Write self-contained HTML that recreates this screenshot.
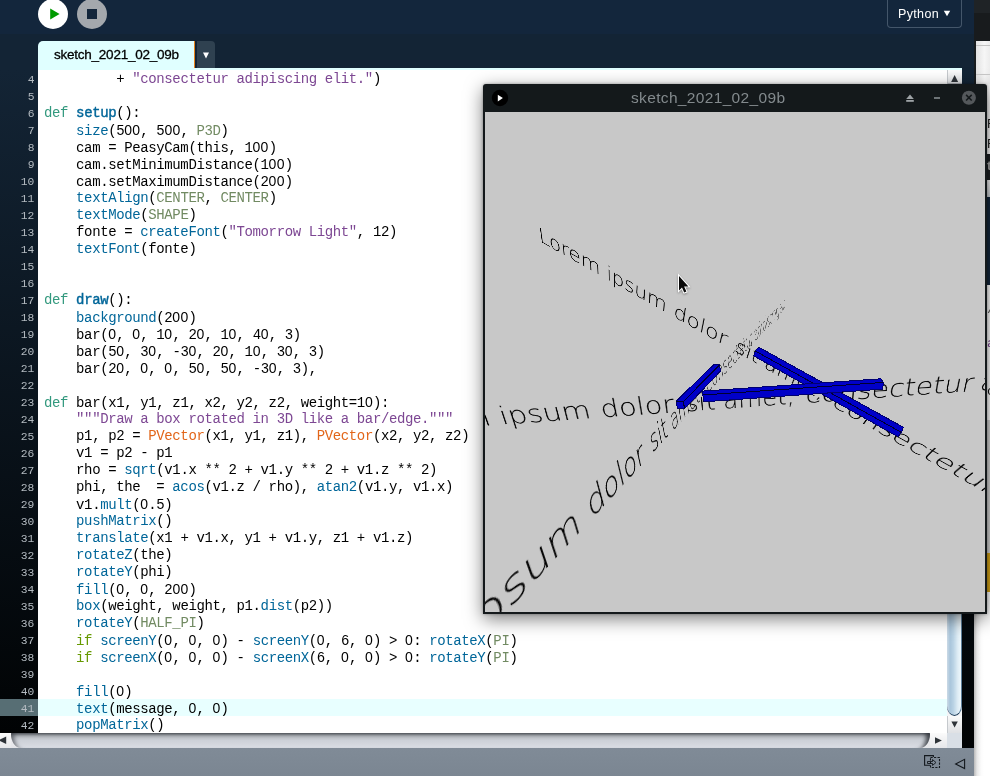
<!DOCTYPE html>
<html><head><meta charset="utf-8"><title>sketch_2021_02_09b</title>
<style>
html,body{margin:0;padding:0;background:#12243a;}
body{width:990px;height:776px;overflow:hidden;}
#app{position:relative;width:990px;height:776px;overflow:hidden;background:#132538;font-family:"Liberation Sans",sans-serif;}
#app>div{position:absolute;will-change:transform;}
#toolbar{left:0;top:0;width:974px;height:70px;background:linear-gradient(#13263c 0,#13263c 34px,#132435 34px,#132435 100%);}
#run{left:38px;top:-1px;width:30px;height:30px;}
#stop{left:77px;top:-1px;width:30px;height:30px;}
#mode{left:887px;top:0;width:75px;height:28px;border:1px solid #44566a;border-top:none;border-radius:0 0 4px 4px;box-sizing:border-box;color:#fff;}
#mode .mt{position:absolute;left:10px;top:6.6px;font-size:12.5px;line-height:15px;letter-spacing:0.35px;}
#mode .tri{position:absolute;left:54.5px;top:10px;}
#tab{left:38px;top:41px;width:156px;height:29px;background:#e0ffff;border-radius:5px 0 0 0;color:#000;font-size:13.5px;line-height:27px;}
#tab span{position:absolute;left:16px;top:0;white-space:nowrap;letter-spacing:-0.24px;-webkit-text-stroke:0.3px #000;}
#tabline{left:194px;top:41px;width:1px;height:27px;background:#e8841a;}
#tabarrow{left:197px;top:41px;width:18px;height:27px;background:#2f4150;border-radius:0 4px 0 0;}
#topline{left:38px;top:68px;width:924px;height:2px;background:#e0ffff;}
#gutter{left:0;top:70px;width:38px;height:663px;background:linear-gradient(#132435,#010304);color:#b4bbc1;font-family:"Liberation Mono",monospace;font-size:11.3px;overflow:hidden;}
#gutter div{height:17px;line-height:21px;text-align:right;padding-right:3.4px;letter-spacing:0.2px;}
#gutter div.hl{background:#576e74;}
#code{left:38px;top:70px;width:909px;height:663px;background:#fff;color:#000;font-family:"Liberation Mono",monospace;font-size:14px;letter-spacing:-0.38px;overflow:hidden;white-space:pre;}
#code div{height:17px;line-height:19px;padding-left:6px;}
#code div.hl{background:#e8ffff;}
.k{color:#33997e;}
.f{color:#006699;-webkit-text-stroke:0.4px #006699;}
.b{color:#006699;}
.c{color:#718a62;}
.s{color:#7d4793;}
.p{color:#e2661a;}
.i{color:#669900;}
#vscroll{left:947px;top:70px;width:15px;height:663px;background:#f3f4f6;}
#vscroll .sbtn{position:absolute;left:0;width:15px;background:linear-gradient(#fafafa,#dfe1e4);}
#vscroll .up{top:0;height:14px;box-shadow:inset 1px 0 0 #c5c9cd,inset 0 -1px 0 #b9bdc2;}
#vscroll .down{top:646px;height:17px;box-shadow:inset 1px 0 0 #c5c9cd;}
#vscroll .vthumb{position:absolute;left:0;top:14px;width:15px;height:632px;box-sizing:border-box;border-radius:0 0 9px 9px/0 0 12px 12px;border-bottom:1.5px solid #1d3a56;border-right:1px solid #5d7f9b;background:linear-gradient(90deg,#ccdae6 0,#a9c5db 22%,#b9d2e4 45%,#dcebf4 75%,#eff8fc 100%);}
#hscroll{left:0;top:733px;width:947px;height:15px;background:linear-gradient(#f1f1f3,#e4e5e9);box-shadow:inset 0 1px 0 #8e9298;}
#hscroll .hbtn{position:absolute;top:0;height:15px;background:linear-gradient(#fbfbfb,#e6e7ea);}
#hscroll .left{left:0;width:11px;}
#hscroll .right{left:930px;width:17px;}
#hscroll .hthumb{position:absolute;left:11px;top:0;width:919px;height:15px;border-radius:1px 1px 10px 10px/1px 1px 14px 14px;background:linear-gradient(#8f949a 0,#b4b8be 20%,#cdd1d8 50%,#dadde4 100%);box-shadow:inset 5px 2px 4px -2px rgba(40,44,50,.6),inset -6px 2px 4px -2px rgba(30,34,40,.75);}
#corner{left:947px;top:733px;width:15px;height:15px;background:#d9dfe6;}
#darkstrip{left:962px;top:70px;width:12px;height:678px;background:linear-gradient(#132435,#010304);}
#status{left:0;top:748px;width:974px;height:28px;background:linear-gradient(#808b97,#7b8692);}
#sticons{left:921px;top:748px;width:54px;height:28px;}
#win{left:483px;top:84px;width:504px;height:530px;background:#14191b;border-radius:3px 3px 0 0;box-shadow:0 5px 18px rgba(0,0,0,.5),0 0 3px rgba(0,0,0,.35);}
#titlebar{position:absolute;left:0;top:0;width:504px;height:28px;}
#wicon{position:absolute;left:8px;top:5px;}
#wtitle{position:absolute;left:148px;top:0;line-height:28px;font-size:15.5px;color:#838a8d;white-space:nowrap;letter-spacing:0.34px;}
#wbtns{position:absolute;left:413px;top:0;}
#canvas{position:absolute;left:2px;top:28px;width:500px;height:500px;background:#c8c8c8;overflow:hidden;}
#bars{position:absolute;left:0;top:0;}
.bf{fill:#0000c8;stroke:#0000c8;stroke-width:1;stroke-linejoin:round;}
.be{fill:none;stroke:#000030;stroke-width:1;}
#cursor{left:672px;top:270px;width:20px;height:26px;filter:drop-shadow(0 1px 1px rgba(0,0,0,.35));}
#bgwin{left:974px;top:0;width:16px;height:776px;overflow:hidden;background:#fff;}
#bgwin>div,#bgwin>span{position:absolute;}
.z{font-family:"Liberation Sans",sans-serif;letter-spacing:0.23px;}
.bo{fill:none;stroke:#00002a;stroke-width:1;stroke-opacity:.55;}

.t3d{position:absolute;left:0;top:0;width:1280px;height:96px;transform-origin:0 0;font-family:"DejaVu Sans Light","DejaVu Sans",sans-serif;font-weight:200;font-size:44.20px;line-height:1;color:#000;white-space:nowrap;}
.t3d .w{position:absolute;display:block;transform-origin:0 0;}

</style></head>
<body>
<div id="app">
 <div id="toolbar"></div>
 <div id="run"><svg width="30" height="30" viewBox="0 0 30 30"><circle cx="15" cy="15" r="15" fill="#fff"/><path d="M12.2 9.4 L21.6 15 L12.2 20.6 Z" fill="#009a00"/></svg></div>
 <div id="stop"><svg width="30" height="30" viewBox="0 0 30 30"><circle cx="15" cy="15" r="15" fill="#a4a8ad"/><rect x="10" y="10" width="10" height="10" fill="#13263b"/></svg></div>
 <div id="mode"><span class="mt">Python</span><svg class="tri" width="8" height="7" viewBox="0 0 8 7"><path d="M0.8 0.8 L7.2 0.8 L4 6.3 Z" fill="#fff"/></svg></div>
 <div id="tab"><span>sketch_2021_02_09b</span></div>
 <div id="tabline"></div>
 <div id="tabarrow"><svg width="18" height="27" viewBox="0 0 18 27"><path d="M6 11.5 L12 11.5 L9 17.5 Z" fill="#fff"/></svg></div>
 <div id="topline"></div>
 <div id="gutter"><div>4</div><div>5</div><div>6</div><div>7</div><div>8</div><div>9</div><div>10</div><div>11</div><div>12</div><div>13</div><div>14</div><div>15</div><div>16</div><div>17</div><div>18</div><div>19</div><div>20</div><div>21</div><div>22</div><div>23</div><div>24</div><div>25</div><div>26</div><div>27</div><div>28</div><div>29</div><div>30</div><div>31</div><div>32</div><div>33</div><div>34</div><div>35</div><div>36</div><div>37</div><div>38</div><div>39</div><div>40</div><div class="hl">41</div><div>42</div></div>
 <div id="code"><div>         + <span class="s">&quot;consectetur adipiscing elit.&quot;</span>)</div><div></div><div><span class="k">def</span> <span class="f">setup</span>():</div><div>    <span class="b">size</span>(5<span class="z">0</span><span class="z">0</span>, 5<span class="z">0</span><span class="z">0</span>, <span class="c">P3D</span>)</div><div>    cam = PeasyCam(this, 1<span class="z">0</span><span class="z">0</span>)</div><div>    cam.setMinimumDistance(1<span class="z">0</span><span class="z">0</span>)</div><div>    cam.setMaximumDistance(2<span class="z">0</span><span class="z">0</span>)</div><div>    <span class="b">textAlign</span>(<span class="c">CENTER</span>, <span class="c">CENTER</span>)</div><div>    <span class="b">textMode</span>(<span class="c">SHAPE</span>)</div><div>    fonte = <span class="b">createFont</span>(<span class="s">&quot;Tomorrow Light&quot;</span>, 12)</div><div>    <span class="b">textFont</span>(fonte)</div><div></div><div></div><div><span class="k">def</span> <span class="f">draw</span>():</div><div>    <span class="b">background</span>(2<span class="z">0</span><span class="z">0</span>)</div><div>    bar(<span class="z">0</span>, <span class="z">0</span>, 1<span class="z">0</span>, 2<span class="z">0</span>, 1<span class="z">0</span>, 4<span class="z">0</span>, 3)</div><div>    bar(5<span class="z">0</span>, 3<span class="z">0</span>, -3<span class="z">0</span>, 2<span class="z">0</span>, 1<span class="z">0</span>, 3<span class="z">0</span>, 3)</div><div>    bar(2<span class="z">0</span>, <span class="z">0</span>, <span class="z">0</span>, 5<span class="z">0</span>, 5<span class="z">0</span>, -3<span class="z">0</span>, 3),</div><div></div><div><span class="k">def</span> bar(x1, y1, z1, x2, y2, z2, weight=1<span class="z">0</span>):</div><div>    <span class="s">&quot;&quot;&quot;Draw a box rotated in 3D like a bar/edge.&quot;&quot;&quot;</span></div><div>    p1, p2 = <span class="p">PVector</span>(x1, y1, z1), <span class="p">PVector</span>(x2, y2, z2)</div><div>    v1 = p2 - p1</div><div>    rho = <span class="b">sqrt</span>(v1.x ** 2 + v1.y ** 2 + v1.z ** 2)</div><div>    phi, the  = <span class="b">acos</span>(v1.z / rho), <span class="b">atan2</span>(v1.y, v1.x)</div><div>    v1.<span class="b">mult</span>(<span class="z">0</span>.5)</div><div>    <span class="b">pushMatrix</span>()</div><div>    <span class="b">translate</span>(x1 + v1.x, y1 + v1.y, z1 + v1.z)</div><div>    <span class="b">rotateZ</span>(the)</div><div>    <span class="b">rotateY</span>(phi)</div><div>    <span class="b">fill</span>(<span class="z">0</span>, <span class="z">0</span>, 2<span class="z">0</span><span class="z">0</span>)</div><div>    <span class="b">box</span>(weight, weight, p1.<span class="b">dist</span>(p2))</div><div>    <span class="b">rotateY</span>(<span class="c">HALF_PI</span>)</div><div>    <span class="i">if</span> <span class="b">screenY</span>(<span class="z">0</span>, <span class="z">0</span>, <span class="z">0</span>) - <span class="b">screenY</span>(<span class="z">0</span>, 6, <span class="z">0</span>) &gt; <span class="z">0</span>: <span class="b">rotateX</span>(<span class="c">PI</span>)</div><div>    <span class="i">if</span> <span class="b">screenX</span>(<span class="z">0</span>, <span class="z">0</span>, <span class="z">0</span>) - <span class="b">screenX</span>(6, <span class="z">0</span>, <span class="z">0</span>) &gt; <span class="z">0</span>: <span class="b">rotateY</span>(<span class="c">PI</span>)</div><div></div><div>    <span class="b">fill</span>(<span class="z">0</span>)</div><div class="hl">    <span class="b">text</span>(message, <span class="z">0</span>, <span class="z">0</span>)</div><div>    <span class="b">popMatrix</span>()</div></div>
 <div id="vscroll">
   <div class="sbtn up"><svg width="15" height="14" viewBox="0 0 15 14"><path d="M4.1 11.9 L11.1 11.9 L7.6 5 Z" fill="#2e3338"/></svg></div>
   <div class="vthumb"></div>
   <div class="sbtn down"><svg width="15" height="17" viewBox="0 0 15 17"><path d="M4.4 5.6 L10.8 5.6 L7.6 11.4 Z" fill="#2e3338"/></svg></div>
 </div>
 <div id="hscroll">
   <div class="hbtn left"><svg width="11" height="15" viewBox="0 0 11 15"><path d="M6.2 3.4 L6.2 11 L-1.6 7.2 Z" fill="#2e3338"/></svg></div>
   <div class="hthumb"></div>
   <div class="hbtn right"><svg width="17" height="15" viewBox="0 0 17 15"><path d="M5 4.2 L5 10.8 L11.9 7.5 Z" fill="#2e3338"/></svg></div>
 </div>
 <div id="corner"></div>
 <div id="darkstrip"></div>
 <div id="status"></div>
 <div id="sticons"><svg width="54" height="28" viewBox="921 748 54 28">
   <g fill="none" stroke="#14191e" stroke-width="1.1">
   <path d="M930 755.6 H924.6 V765.2 H930 M933.4 757 V755.6 H930"/>
   <rect x="930.5" y="757.5" width="9" height="10" stroke-dasharray="2.2 1.3"/>
   <path d="M927.5 761.5 H932.5 V759.6 L936 762.5 L932.5 765.4 V763.5 H927.5 Z" stroke-width="0.9"/>
   <path d="M964.6 759.3 L964.6 768.6 L955.6 763.9 Z" stroke-width="1.1"/>
   </g></svg></div>
 <div id="bgwin">
   <div style="left:0;top:0;width:16px;height:41px;background:linear-gradient(#1f2326 0,#1f2326 13px,#181b1d 13px,#181b1d 100%)"></div>
   <div style="left:0;top:41px;width:2px;height:243px;background:#181c1e"></div>
   <div style="left:2px;top:41px;width:14px;height:44px;background:linear-gradient(90deg,#e2e2e2,#f6f6f6 60%,#ececec)"></div>
   <div style="left:2px;top:45px;width:14px;height:1px;background:#c2c2c2"></div>
   <div style="left:2px;top:74px;width:14px;height:1px;background:#c8c8c8"></div>
   <div style="left:2px;top:84px;width:14px;height:70px;background:#f4f4f4"></div>
   <div style="left:2px;top:154px;width:14px;height:26px;background:#1c2023"></div>
   <div style="left:2px;top:180px;width:14px;height:17px;background:linear-gradient(#f0f0f0,#c9cdd2)"></div>
   <div style="left:2px;top:197px;width:14px;height:88px;background:#13263b"></div>
   <div style="left:2px;top:285px;width:14px;height:268px;background:#fdfdfd"></div>
   <div style="left:2px;top:420px;width:14px;height:133px;background:#d2d2d2"></div>
   <div style="left:2px;top:553px;width:14px;height:39px;background:#d6a419"></div>
   <div style="left:0;top:592px;width:16px;height:184px;background:linear-gradient(90deg,#b9b9b9 0,#e6e6e6 3px,#fbfbfb 7px,#fff 10px)"></div>
   <span style="left:13px;top:336px;color:#7d4793;font:13px 'Liberation Mono',monospace">a</span>
   <span style="left:13px;top:302px;color:#555;font:13px 'Liberation Mono',monospace">/</span>
   <span style="left:13px;top:384px;color:#111;font:13px 'Liberation Mono',monospace">c</span>
   <span style="left:13px;top:116px;color:#222;font:13px 'Liberation Sans',sans-serif">F</span>
   <span style="left:13px;top:136px;color:#222;font:13px 'Liberation Sans',sans-serif">F</span>
   <span style="left:13px;top:158px;color:#aaa;font:bold 13px 'Liberation Sans',sans-serif">t</span>
 </div>

<div id="win">
  <div id="titlebar">
    <svg id="wicon" width="18" height="18" viewBox="0 0 18 18"><circle cx="9" cy="9" r="8.2" fill="#000"/><path d="M6.8 5.8 L11.9 9 L6.8 12.4 Z" fill="#fff"/></svg>
    <span id="wtitle">sketch_2021_02_09b</span>
    <svg id="wbtns" width="90" height="28" viewBox="0 0 90 28">
      <path d="M10.2 15 L14 10.6 L17.8 15 Z" fill="#9ea3a6"/><rect x="10.2" y="16" width="7.6" height="1.8" fill="#9ea3a6"/>
      <rect x="38" y="13" width="6" height="2" fill="#6d7376"/>
      <circle cx="72.9" cy="13.7" r="7" fill="#54585b"/>
      <line x1="70.1" y1="10.9" x2="75.7" y2="16.5" stroke="#14191b" stroke-width="1.5"/><line x1="75.7" y1="10.9" x2="70.1" y2="16.5" stroke="#14191b" stroke-width="1.5"/>
    </svg>
  </div>
  <div id="canvas">
    <div class="t3d" style="transform:matrix3d(2.5557221,0.44697013,0,0.0061701379,0.95527556,3.4555112,0,0.0023930984,0,0,1,0,-591.15207,929.62118,0,1)"><span class="w" style="left:16.8px;top:35.8px;transform:scaleX(1.1163)">Lorem</span><span class="w" style="left:185.6px;top:35.8px;transform:scaleX(1.0297)">ipsum</span><span class="w" style="left:340.0px;top:35.8px;transform:scaleX(1.0092)">dolor</span><span class="w" style="left:470.8px;top:35.8px;transform:scaleX(0.8969)">sit</span><span class="w" style="left:529.6px;top:35.8px;transform:scaleX(0.8765);color:#1c1c1c">amet,</span><span class="w" style="left:660.0px;top:35.8px;transform:scaleX(1.0296);color:#3a3a3a">consectetur</span><span class="w" style="left:940.8px;top:35.8px;transform:scaleX(1.0241);color:#5a5a5a">adipiscing</span><span class="w" style="left:1181.2px;top:35.8px;transform:scaleX(0.9239);color:#6a6a6a">elit.</span></div>
    <div class="t3d" style="transform:matrix3d(0.69331608,-0.03374661,0,4.9579101e-05,0.20394324,0.78551516,0,0.00068691628,0,0,1,0,-125.56592,280.02463,0,1)"><span class="w" style="left:16.8px;top:35.8px;transform:scaleX(1.1163)">Lorem</span><span class="w" style="left:185.6px;top:35.8px;transform:scaleX(1.0297)">ipsum</span><span class="w" style="left:340.0px;top:35.8px;transform:scaleX(1.0092)">dolor</span><span class="w" style="left:470.8px;top:35.8px;transform:scaleX(0.8969)">sit</span><span class="w" style="left:529.6px;top:35.8px;transform:scaleX(0.8765)">amet,</span><span class="w" style="left:660.0px;top:35.8px;transform:scaleX(1.0296)">consectetur</span><span class="w" style="left:940.8px;top:35.8px;transform:scaleX(1.0241)">adipiscing</span><span class="w" style="left:1181.2px;top:35.8px;transform:scaleX(0.9239)">elit.</span></div>
    <div class="t3d" style="transform:matrix3d(0.38760189,0.19242046,0,-0.00026806804,0.11551037,0.58026809,0,0.00088757443,0,0,1,0,42.963461,91.263177,0,1)"><span class="w" style="left:16.8px;top:35.8px;transform:scaleX(1.1163)">Lorem</span><span class="w" style="left:185.6px;top:35.8px;transform:scaleX(1.0297)">ipsum</span><span class="w" style="left:340.0px;top:35.8px;transform:scaleX(1.0092)">dolor</span><span class="w" style="left:470.8px;top:35.8px;transform:scaleX(0.8969)">sit</span><span class="w" style="left:529.6px;top:35.8px;transform:scaleX(0.8765)">amet,</span><span class="w" style="left:660.0px;top:35.8px;transform:scaleX(1.0296)">consectetur</span><span class="w" style="left:940.8px;top:35.8px;transform:scaleX(1.0241)">adipiscing</span><span class="w" style="left:1181.2px;top:35.8px;transform:scaleX(0.9239)">elit.</span></div>
    <svg id="bars" width="500" height="500" viewBox="485 112 500 500" shape-rendering="crispEdges">
      <g>
        <path class="bf" d="M755.4 351.0 L901.5 432.5 L897.9 436.7 L753.7 355.9 Z"/>
        <path class="bf" d="M755.4 351.0 L758.6 347.1 L903.4 427.3 L901.5 432.5 Z"/>
        <path class="be" d="M755.4 351.0 L901.5 432.5"/>
        <path class="bo" d="M897.9 436.7 L901.5 432.5"/>
        <path class="bo" d="M753.7 355.9 L897.9 436.7"/>
        <path class="bo" d="M753.7 355.9 L755.4 351.0"/>
        <path class="bo" d="M755.4 351.0 L758.6 347.1"/>
        <path class="bo" d="M758.6 347.1 L903.4 427.3"/>
        <path class="bo" d="M901.5 432.5 L903.4 427.3"/>
        <path class="bf" d="M713.4 364.9 L719.6 365.0 L683.3 401.5 L676.2 401.2 Z"/>
        <path class="bf" d="M719.6 365.0 L720.4 371.2 L684.6 408.7 L683.3 401.5 Z"/>
        <path class="bf" d="M676.2 401.2 L683.3 401.5 L684.6 408.7 L677.5 408.3 Z"/>
        <path class="bo" d="M713.5 364.9 L719.6 365.0"/>
        <path class="be" d="M683.3 401.5 L719.6 365.0"/>
        <path class="be" d="M676.2 401.2 L683.3 401.5"/>
        <path class="bo" d="M676.2 401.2 L713.5 364.9"/>
        <path class="bo" d="M719.6 365.0 L720.4 371.2"/>
        <path class="bo" d="M684.6 408.7 L720.4 371.2"/>
        <path class="be" d="M683.3 401.5 L684.6 408.7"/>
        <path class="bo" d="M677.5 408.3 L684.6 408.7"/>
        <path class="bo" d="M676.2 401.2 L677.5 408.3"/>
        <path class="bf" d="M883.4 382.4 L702.9 395.0 L703.0 391.1 L880.6 378.8 Z"/>
        <path class="bf" d="M882.6 389.1 L703.5 401.8 L702.9 395.0 L883.4 382.4 Z"/>
        <path class="be" d="M702.9 395.0 L883.4 382.4"/>
        <path class="bo" d="M702.9 395.0 L703.0 391.1"/>
        <path class="bo" d="M703.0 391.1 L880.6 378.8"/>
        <path class="bo" d="M880.6 378.8 L883.4 382.4"/>
        <path class="bo" d="M703.5 401.8 L882.6 389.1"/>
        <path class="bo" d="M702.9 395.0 L703.5 401.8"/>
        <path class="bo" d="M882.6 389.1 L883.4 382.4"/>
      </g>
    </svg>
  </div>
</div>

 <div id="cursor"><svg width="20" height="26" viewBox="672 270 20 26"><path d="M679 276 L679 290.4 L682 287.5 L684.2 292.5 L686.4 291.6 L684.1 286.6 L688.4 286.4 Z" fill="#0a0a0a" stroke="#fff" stroke-width="2" paint-order="stroke" stroke-linejoin="miter"/></svg></div>
</div>
</body></html>
